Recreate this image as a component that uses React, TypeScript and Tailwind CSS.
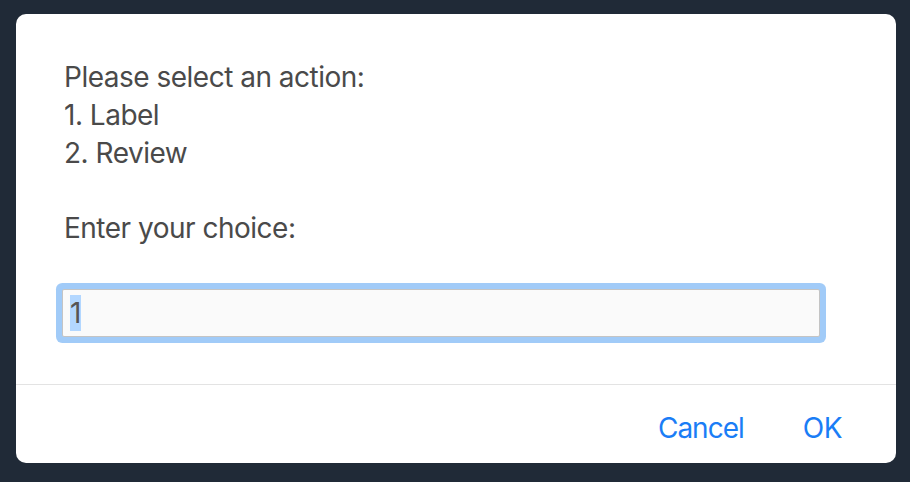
export default function App() {
  return (
    <div className="min-h-screen w-full bg-[#202a37] px-4 pt-[14px] font-['Inter',sans-serif]">
      <div className="flex h-[449px] w-[880px] flex-col rounded-[10px] bg-white">
        <div className="flex-1 pl-[48px] pr-[70px] pt-[45px]">
          <div className="text-[28px] leading-[37.75px] tracking-[-0.5px] text-[#4a4a4a]">
            <p>Please select an action:</p>
            <p>1. Label</p>
            <p>2. Review</p>
            <p className="h-[37.75px]" />
            <p>Enter your choice:</p>
          </div>
          <div className="ml-[-2px] mt-[41px] w-[758px] rounded-[2px] border border-[#c4c4c4] bg-[#fafafa] px-[7px] py-[5px] ring-[6px] ring-[#a1cbf8]">
            <span className="inline-block h-[36px] bg-[#b3d7ff] text-[28px] leading-[36px] tracking-[-0.5px] text-[#555555]">1</span>
          </div>
        </div>
        <div className="border-t border-[#e3e3e3]" />
        <div className="flex h-[78px] items-center justify-end gap-[59px] pr-[54px] pt-[7px] text-[28px] text-[#1a7df6]">
          <button className="cursor-pointer tracking-[-1px]">Cancel</button>
          <button className="cursor-pointer tracking-[-0.5px]">OK</button>
        </div>
      </div>
    </div>
  );
}
